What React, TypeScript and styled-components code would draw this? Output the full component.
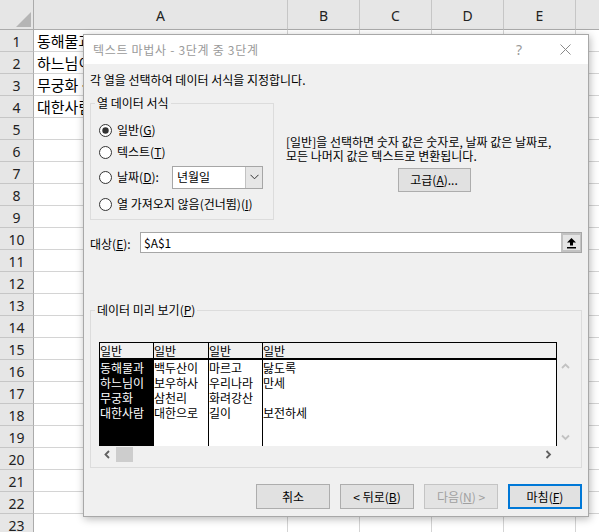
import React from 'react';
import styled, { createGlobalStyle, css } from 'styled-components';

const GlobalStyle = createGlobalStyle`
  html, body { margin: 0; padding: 0; width: 599px; height: 532px; overflow: hidden; background: #fff; }
  body { font-family: "Noto Sans CJK KR", "Noto Sans", sans-serif; }
  * { box-sizing: border-box; }
`;

const UI_FONT = `"Noto Sans CJK KR", "Noto Sans", sans-serif`;

const Page = styled.div`
  position: relative;
  width: 599px;
  height: 532px;
  overflow: hidden;
`;

/* ---------- spreadsheet ---------- */
const Sheet = styled.div`
  display: grid;
  grid-template-columns: 34px 254px 72px 72px 72px 72px 72px;
  grid-template-rows: 30px repeat(23, 22px);
`;

const Corner = styled.div`
  position: relative;
  background: #e6e6e6;
  border-right: 1px solid #ababab;
  border-bottom: 1px solid #ababab;
`;

const CornerTriangle = styled.svg`
  position: absolute;
  right: 2px;
  bottom: 2px;
`;

const ColHead = styled.div`
  background: #e6e6e6;
  border-right: 1px solid #c6c6c6;
  border-bottom: 1px solid #ababab;
  display: flex;
  align-items: center;
  justify-content: center;
  font-family: "Noto Sans", "Liberation Sans", sans-serif;
  font-size: 14px;
  color: #222;
  padding-top: 2px;
`;

const RowHead = styled.div`
  background: #e6e6e6;
  border-right: 1px solid #ababab;
  border-bottom: 1px solid #c6c6c6;
  display: flex;
  align-items: center;
  justify-content: center;
  font-family: "Noto Sans", "Liberation Sans", sans-serif;
  font-size: 14px;
  color: #222;
  padding-top: 2px;
`;

const Cell = styled.div`
  border-right: 1px solid #d4d4d4;
  border-bottom: 1px solid #d4d4d4;
  font-family: ${UI_FONT};
  font-size: 15px;
  line-height: 21px;
  padding-left: 3px;
  white-space: nowrap;
  color: #000;
`;

/* ---------- dialog ---------- */
const Dialog = styled.div`
  position: absolute;
  left: 83px;
  top: 34px;
  width: 506px;
  height: 483px;
  background: #f0f0f0;
  border: 1px solid #a8a8a8;
  box-shadow: 1px 2px 8px rgba(0, 0, 0, 0.28);
  display: flex;
  flex-direction: column;
  font-family: ${UI_FONT};
  font-size: 12px;
  color: #000;
`;

const TitleBar = styled.div`
  height: 29px;
  background: #fff;
  display: flex;
  align-items: center;
  padding-left: 9px;
`;

const Title = styled.div`
  flex: 1;
  color: #9a9a9a;
  font-size: 12px;
  letter-spacing: 0.7px;
  line-height: 16px;
  padding-top: 1px;
`;

const TitleButton = styled.div`
  width: 46px;
  height: 29px;
  display: flex;
  align-items: center;
  justify-content: center;
  color: #9a9a9a;
  font-family: "Noto Sans", sans-serif;
  font-size: 14px;
`;

const Body = styled.div`
  flex: 1;
  display: flex;
  flex-direction: column;
  padding: 0 6px;
`;

const Instruction = styled.div`
  margin-top: 8px;
  line-height: 16px;
`;

const TopSection = styled.div`
  margin-top: 7px;
  display: flex;
  align-items: flex-start;
`;

const Group = styled.fieldset<{ $width?: number; $pad: string }>`
  margin: 0;
  min-width: 0;
  ${(p) => (p.$width ? css`width: ${p.$width}px;` : css`width: 100%;`)}
  padding: ${(p) => p.$pad};
  border: 1px solid #dcdcdc;
`;

const Legend = styled.legend`
  margin-left: -4px;
  padding: 0 2px;
  line-height: 16px;
  font-size: 12px;
`;

const RadioList = styled.div`
  display: flex;
  flex-direction: column;
  gap: 2px;
`;

const RadioRow = styled.div<{ $h: number }>`
  height: ${(p) => p.$h}px;
  display: flex;
  align-items: center;
  gap: 5px;
  line-height: 16px;
  white-space: nowrap;
`;

const RadioLabel = styled.span<{ $w?: number }>`
  ${(p) => (p.$w ? css`width: ${p.$w}px;` : '')}
`;

const U = styled.span`
  text-decoration: underline;
  text-underline-offset: 1px;
`;

const Select = styled.div`
  width: 91px;
  height: 23px;
  border: 1px solid #a6a6a6;
  background: #fff;
  display: flex;
  align-items: stretch;
`;

const SelectText = styled.div`
  flex: 1;
  padding-left: 4px;
  display: flex;
  align-items: center;
  line-height: 16px;
`;

const SelectButton = styled.div`
  width: 17px;
  background: #e6e6e6;
  border-left: 1px solid #c2c2c2;
  display: flex;
  align-items: center;
  justify-content: center;
`;

const InfoArea = styled.div`
  flex: 1;
  margin-left: 12px;
  padding-top: 40px;
  display: flex;
  flex-direction: column;
`;

const InfoText = styled.div`
  line-height: 14px;
  white-space: nowrap;
`;

const Button = styled.div<{ $w: number; $h: number; $default?: boolean; $disabled?: boolean }>`
  width: ${(p) => p.$w}px;
  height: ${(p) => p.$h}px;
  background: #e1e1e1;
  border: 1px solid #adadad;
  display: flex;
  align-items: center;
  justify-content: center;
  line-height: 16px;
  white-space: nowrap;
  ${(p) =>
    p.$default &&
    css`
      border: 2px solid #0078d7;
    `}
  ${(p) =>
    p.$disabled &&
    css`
      color: #a0a0a0;
      border-color: #c4c4c4;
      background: #e3e3e3;
    `}
`;

const AdvancedButton = styled(Button)`
  align-self: center;
  margin-top: 5px;
`;

const TargetRow = styled.div`
  margin-top: 12px;
  display: flex;
  align-items: center;
`;

const TargetLabel = styled.div`
  width: 50px;
  line-height: 16px;
  padding-top: 2px;
`;

const TargetInput = styled.div`
  flex: 1;
  height: 21px;
  border: 1px solid #a6a6a6;
  background: #fff;
  display: flex;
  align-items: stretch;
`;

const TargetValue = styled.div`
  flex: 1;
  padding-left: 3px;
  display: flex;
  align-items: center;
  line-height: 16px;
`;

const CollapseButton = styled.div`
  width: 20px;
  background: #e5e5e5;
  border: 2px solid #c2c2c2;
  border-right-width: 1px;
  display: flex;
  align-items: center;
  justify-content: center;
`;

const PreviewGroup = styled(Group)`
  margin-top: 49px;
`;

const PreviewBox = styled.div`
  display: grid;
  grid-template-columns: 458px 17px;
  grid-template-rows: 104px 17px;
`;

const DataArea = styled.div`
  background: #fff;
  border-top: 1px solid #000;
  border-left: 1px solid #000;
  border-right: 1px solid #000;
  display: flex;
  overflow: hidden;
`;

const PCol = styled.div<{ $w?: number; $last?: boolean }>`
  ${(p) => (p.$w ? css`width: ${p.$w}px; flex: none;` : css`flex: 1;`)}
  ${(p) => (!p.$last ? css`border-right: 1px solid #000;` : '')}
  display: flex;
  flex-direction: column;
`;

const PHead = styled.div`
  height: 17px;
  background: #f0f0f0;
  border-bottom: 2px solid #000;
  font-size: 12px;
  line-height: 15px;
  white-space: nowrap;
`;

const PBody = styled.div<{ $selected?: boolean }>`
  flex: 1;
  background: ${(p) => (p.$selected ? '#000' : '#fff')};
  color: ${(p) => (p.$selected ? '#fff' : '#000')};
`;

const PCell = styled.div`
  height: 15px;
  font-size: 12px;
  line-height: 15px;
  white-space: nowrap;
`;

const ScrollV = styled.div`
  background: #f0f0f0;
  display: flex;
  flex-direction: column;
  justify-content: space-between;
  align-items: center;
  padding: 20px 0 4px;
`;

const ScrollH = styled.div`
  background: #f0f0f0;
  display: flex;
  align-items: center;
`;

const ArrowBox = styled.div`
  width: 17px;
  height: 17px;
  display: flex;
  align-items: center;
  justify-content: center;
`;

const Thumb = styled.div`
  width: 17px;
  height: 15px;
  background: #cdcdcd;
`;

const Spacer = styled.div`
  flex: 1;
`;

const ScrollCorner = styled.div`
  background: #f0f0f0;
`;

const ButtonRow = styled.div`
  margin-top: 16px;
  display: flex;
  justify-content: flex-end;
  gap: 10px;
`;

/* ---------- icons ---------- */
const RadioIcon = ({ checked }: { checked?: boolean }) => (
  <svg width="13" height="13" viewBox="0 0 13 13" style={{ flex: 'none' }}>
    <circle cx="6.5" cy="6.5" r="6" fill="#fff" stroke="#333" strokeWidth="1" />
    {checked && <circle cx="6.5" cy="6.5" r="3.2" fill="#333" />}
  </svg>
);

const Chevron = ({ dir, color }: { dir: 'up' | 'down' | 'left' | 'right'; color: string }) => {
  const paths: Record<string, string> = {
    up: 'M1 6 L4.5 2.5 L8 6',
    down: 'M1 2.5 L4.5 6 L8 2.5',
    left: 'M6 1 L2.5 4.5 L6 8',
    right: 'M2.5 1 L6 4.5 L2.5 8',
  };
  return (
    <svg width="9" height="9" viewBox="0 0 9 9">
      <path d={paths[dir]} fill="none" stroke={color} strokeWidth="1.8" />
    </svg>
  );
};

const rows: string[] = [
  '동해물과 백두산이 마르고 닳도록',
  '하느님이 보우하사 우리나라 만세',
  '무궁화 삼천리 화려강산',
  '대한사람 대한으로 길이 보전하세',
];

const cols = ['A', 'B', 'C', 'D', 'E', ''];

const previewCols: { w?: number; selected?: boolean; cells: string[] }[] = [
  { w: 54, selected: true, cells: ['동해물과', '하느님이', '무궁화', '대한사람'] },
  { w: 55, cells: ['백두산이', '보우하사', '삼천리', '대한으로'] },
  { w: 54, cells: ['마르고', '우리나라', '화려강산', '길이'] },
  { cells: ['닳도록', '만세', '', '보전하세'] },
];

export default function App() {
  const sheetRows = Array.from({ length: 23 }, (_, i) => i + 1);
  return (
    <Page>
      <GlobalStyle />
      <Sheet>
        <Corner>
          <CornerTriangle width="15" height="15" viewBox="0 0 15 15">
            <polygon points="15,0 15,15 0,15" fill="#b5b5b5" />
          </CornerTriangle>
        </Corner>
        {cols.map((c, i) => (
          <ColHead key={'h' + i}>{c}</ColHead>
        ))}
        {sheetRows.map((r) => (
          <React.Fragment key={r}>
            <RowHead>{r}</RowHead>
            <Cell>{rows[r - 1] ?? ''}</Cell>
            {cols.slice(1).map((_, i) => (
              <Cell key={i} />
            ))}
          </React.Fragment>
        ))}
      </Sheet>

      <Dialog>
        <TitleBar>
          <Title>텍스트 마법사 - 3단계 중 3단계</Title>
          <TitleButton>?</TitleButton>
          <TitleButton>
            <svg width="11" height="11" viewBox="0 0 11 11">
              <path d="M0.5 0.5 L10.5 10.5 M10.5 0.5 L0.5 10.5" stroke="#8a8a8a" strokeWidth="1" />
            </svg>
          </TitleButton>
        </TitleBar>
        <Body>
          <Instruction>각 열을 선택하여 데이터 서식을 지정합니다.</Instruction>
          <TopSection>
            <Group $width={184} $pad="9px 0 3px 8px">
              <Legend>열 데이터 서식</Legend>
              <RadioList>
                <RadioRow $h={20}>
                  <RadioIcon checked />
                  <RadioLabel>
                    일반(<U>G</U>)
                  </RadioLabel>
                </RadioRow>
                <RadioRow $h={20}>
                  <RadioIcon />
                  <RadioLabel>
                    텍스트(<U>T</U>)
                  </RadioLabel>
                </RadioRow>
                <RadioRow $h={26}>
                  <RadioIcon />
                  <RadioLabel $w={50}>
                    날짜(<U>D</U>):
                  </RadioLabel>
                  <Select>
                    <SelectText>년월일</SelectText>
                    <SelectButton>
                      <svg width="9" height="6" viewBox="0 0 9 6">
                        <path d="M0.5 0.8 L4.5 4.8 L8.5 0.8" fill="none" stroke="#333" strokeWidth="1" />
                      </svg>
                    </SelectButton>
                  </Select>
                </RadioRow>
                <RadioRow $h={24}>
                  <RadioIcon />
                  <RadioLabel>
                    열 가져오지 않음(건너뜀)(<U>I</U>)
                  </RadioLabel>
                </RadioRow>
              </RadioList>
            </Group>
            <InfoArea>
              <InfoText>[일반]을 선택하면 숫자 값은 숫자로, 날짜 값은 날짜로,</InfoText>
              <InfoText>모든 나머지 값은 텍스트로 변환됩니다.</InfoText>
              <AdvancedButton $w={73} $h={24}>
                고급(<U>A</U>)...
              </AdvancedButton>
            </InfoArea>
          </TopSection>

          <TargetRow>
            <TargetLabel>
              대상(<U>E</U>):
            </TargetLabel>
            <TargetInput>
              <TargetValue>$A$1</TargetValue>
              <CollapseButton>
                <svg width="11" height="12" viewBox="0 0 11 12">
                  <polygon points="5.5,1 10,5.5 7,5.5 7,8.5 4,8.5 4,5.5 1,5.5" fill="#000" />
                  <rect x="1" y="10" width="9" height="1.5" fill="#000" />
                </svg>
              </CollapseButton>
            </TargetInput>
          </TargetRow>

          <PreviewGroup $pad="24px 6px 4px 8px">
            <Legend>
              데이터 미리 보기(<U>P</U>)
            </Legend>
            <PreviewBox>
              <DataArea>
                {previewCols.map((c, i) => (
                  <PCol key={i} $w={c.w} $last={i === previewCols.length - 1}>
                    <PHead>일반</PHead>
                    <PBody $selected={c.selected}>
                      {c.cells.map((t, j) => (
                        <PCell key={j}>{t}</PCell>
                      ))}
                    </PBody>
                  </PCol>
                ))}
              </DataArea>
              <ScrollV>
                <Chevron dir="up" color="#c2c2c2" />
                <Chevron dir="down" color="#c2c2c2" />
              </ScrollV>
              <ScrollH>
                <ArrowBox>
                  <Chevron dir="left" color="#606060" />
                </ArrowBox>
                <Thumb />
                <Spacer />
                <ArrowBox>
                  <Chevron dir="right" color="#606060" />
                </ArrowBox>
              </ScrollH>
              <ScrollCorner />
            </PreviewBox>
          </PreviewGroup>

          <ButtonRow>
            <Button $w={74} $h={25}>취소</Button>
            <Button $w={74} $h={25}>
              &lt; 뒤로(<U>B</U>)
            </Button>
            <Button $w={74} $h={25} $disabled>
              다음(<U>N</U>) &gt;
            </Button>
            <Button $w={74} $h={25} $default>
              마침(<U>F</U>)
            </Button>
          </ButtonRow>
        </Body>
      </Dialog>
    </Page>
  );
}
